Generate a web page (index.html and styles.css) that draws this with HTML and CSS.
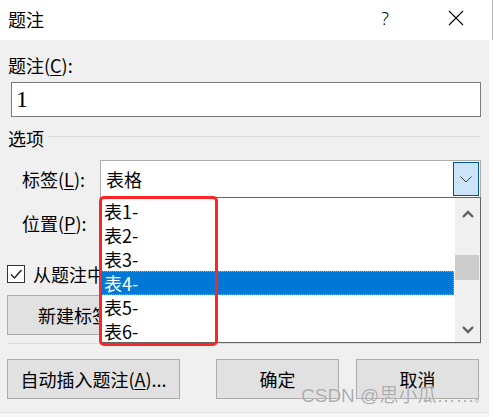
FILE: index.html
```html
<!DOCTYPE html>
<html lang="zh-CN">
<head>
<meta charset="utf-8">
<title>题注</title>
<link rel="stylesheet" href="styles.css">
</head>
<body>
<div class="titlebar">
  <span class="title">题注</span>
  <span class="help">?</span>
  <span class="close"><svg width="16" height="16" viewBox="0 0 16 16"><path d="M1 1 L15 15 M15 1 L1 15" stroke="#000" stroke-width="1.1" fill="none"/></svg></span>
</div>
<div class="main">
  <div class="dialog">
    <div class="label">题注(<u>C</u>):</div>
    <div class="input">1</div>
    <div class="group"><span>选项</span><span class="rule"></span></div>
    <div class="row row-label">
      <span class="lbl">标签(<u>L</u>):</span>
      <div class="combo">
        <span class="combo-text">表格</span>
        <span class="combo-btn"><svg width="12" height="7" viewBox="0 0 12 7"><path d="M0.5 0.5 L6 6 L11.5 0.5" stroke="#404040" stroke-width="1" fill="none"/></svg></span>
      </div>
    </div>
    <div class="row row-pos">
      <span class="lbl">位置(<u>P</u>):</span>
      <div class="combo"></div>
    </div>
    <div class="check-row">
      <span class="check"><svg width="16" height="16" viewBox="0 0 16 16"><path d="M3 8.5 L6.5 12 L13.5 4" stroke="#222" stroke-width="1.4" fill="none"/></svg></span>
      <span class="check-text">从题注中</span>
    </div>
    <div class="btn-row">
      <span class="btn wide">新建标签</span>
    </div>
    <div class="sep"></div>
    <div class="actions">
      <span class="btn wide">自动插入题注(<u>A</u>)...</span>
      <span class="btn ok">确定</span>
      <span class="btn">取消</span>
    </div>

    <div class="dropdown">
      <div class="items">
        <div class="item">表1-</div>
        <div class="item">表2-</div>
        <div class="item">表3-</div>
        <div class="item selected">表4-</div>
        <div class="item">表5-</div>
        <div class="item">表6-</div>
      </div>
      <div class="scrollbar">
        <span class="sb-up"><svg width="12" height="8" viewBox="0 0 12 8"><path d="M1 7 L6 2 L11 7" stroke="#606060" stroke-width="2.4" fill="none"/></svg></span>
        <span class="thumb"></span>
        <span class="sb-fill"></span>
        <span class="sb-down"><svg width="12" height="8" viewBox="0 0 12 8"><path d="M1 1 L6 6 L11 1" stroke="#606060" stroke-width="2.4" fill="none"/></svg></span>
      </div>
    </div>
    <div class="mark"></div>
  </div>
  <div class="edge"></div>
</div>
<div class="watermark">CSDN @思小瓜……<span class="dot">。</span></div>
</body>
</html>
```

FILE: styles.css
```css
html, body {
  margin: 0;
  padding: 0;
}
body {
  width: 493px;
  height: 417px;
  overflow: hidden;
  background: #fff;
  font-family: "Noto Sans CJK SC", "Noto Sans", sans-serif;
  font-size: 18px;
  color: #000;
  position: relative;
}
u {
  text-decoration: underline;
  text-underline-offset: 2px;
  text-decoration-thickness: 1px;
}

.titlebar {
  height: 40px;
  display: flex;
  align-items: center;
  background: #fff;
  padding-right: 13px;
  border-right: 1px solid #b9b9b9;
  box-sizing: border-box;
  width: 493px;
}
.title {
  flex: 1;
  padding-left: 8px;
  line-height: 24px;
  margin-top: -3px;
}
.help {
  width: 46px;
  text-align: center;
  line-height: 24px;
  margin-top: -4px;
  margin-right: 25px;
  font-family: "Noto Sans", sans-serif;
  font-size: 18px;
  font-weight: 300;
}
.close {
  width: 46px;
  display: flex;
  justify-content: center;
  align-items: center;
  margin-top: -4px;
}
.close svg { display: block; }

.main {
  display: flex;
  height: 377px;
  background: #f7f7f7;
}
.dialog {
  width: 489px;
  height: 373px;
  box-sizing: border-box;
  background: #f0f0f0;
  padding: 13px 8px 0 7px;
  position: relative;
  border-bottom: 1px solid #e2e2e2;
}
.edge {
  flex: 1;
  background: #fff;
}

.label {
  height: 24px;
  line-height: 24px;
  padding-left: 1px;
}
.input {
  margin: 5px 0 0 4px;
  width: 470px;
  height: 35px;
  box-sizing: border-box;
  border: 1px solid #7a7a7a;
  background: #fff;
  font-family: "Liberation Serif", serif;
  font-size: 24px;
  line-height: 32px;
  padding-left: 4px;
}
.group {
  margin-top: 9px;
  height: 24px;
  display: flex;
  line-height: 24px;
  padding-left: 1px;
}
.rule {
  flex: 1;
  height: 1px;
  background: #dcdcdc;
  margin-top: 10px;
  margin-left: 4px;
}
.row {
  display: flex;
  align-items: center;
  height: 38px;
}
.row-label { margin-top: 10px; }
.row-pos { margin-top: 6px; }
.lbl {
  width: 93px;
  padding-left: 15px;
  box-sizing: border-box;
  line-height: 24px;
}
.combo {
  width: 381px;
  height: 38px;
  box-sizing: border-box;
  border: 1px solid #adadad;
  background: #fff;
  display: flex;
  align-items: center;
}
.combo-text {
  flex: 1;
  padding-left: 5px;
  line-height: 24px;
}
.combo-btn {
  width: 26px;
  height: 34px;
  box-sizing: border-box;
  margin-right: 1px;
  background: #cce4f7;
  border: 1px solid #005499;
  display: flex;
  align-items: center;
  justify-content: center;
}
.combo-btn svg { display: block; }

/* rows partly covered by the open list: clipped at the list's left edge */
.check-row {
  margin-top: 20px;
  height: 24px;
  width: 93px;
  overflow: hidden;
  display: flex;
  align-items: center;
  line-height: 24px;
  white-space: nowrap;
}
.check {
  flex: none;
  width: 18px;
  height: 18px;
  box-sizing: border-box;
  border: 1px solid #333;
  background: #fff;
  display: flex;
  align-items: center;
  justify-content: center;
  margin-right: 8px;
}
.check svg { display: block; }

.btn-row {
  margin-top: 9px;
  width: 93px;
  overflow: hidden;
  display: flex;
}
.btn-row .btn {
  flex: none;
  justify-content: flex-start;
  padding-left: 30px;
}
.btn {
  height: 40px;
  width: 123px;
  box-sizing: border-box;
  border: 1px solid #adadad;
  background: #e1e1e1;
  display: flex;
  align-items: center;
  justify-content: center;
  line-height: 24px;
  white-space: nowrap;
}
.btn.wide { width: 173px; }
.sep {
  margin-top: 8px;
  height: 1px;
  background: #dadada;
  width: 474px;
}
.actions {
  margin-top: 15px;
  display: flex;
}
.actions .ok {
  margin-left: 36px;
  margin-right: 17px;
}

/* open drop-down list */
.dropdown {
  position: absolute;
  left: 100px;
  top: 157px;
  width: 381px;
  height: 146px;
  box-sizing: border-box;
  border: 1px solid #646464;
  background: #fff;
  display: flex;
}
.items {
  flex: 1;
  padding-top: 1px;
  margin-right: 1px;
}
.item {
  height: 24px;
  line-height: 24px;
  padding-left: 3px;
  box-sizing: border-box;
}
.item.selected {
  background: #0078d7;
  color: #fff;
  outline: 1px dotted #e69b3c;
  outline-offset: -1px;
}
.scrollbar {
  width: 25px;
  background: #f0f0f0;
  display: flex;
  flex-direction: column;
}
.sb-up {
  height: 32px;
  display: flex;
  align-items: center;
  justify-content: center;
}
.thumb {
  margin-top: 25px;
  height: 25px;
  background: #cdcdcd;
  margin-right: 1px;
}
.sb-fill { flex: 1; }
.sb-down {
  height: 24px;
  display: flex;
  align-items: center;
  justify-content: center;
}
.scrollbar svg { display: block; }

/* red annotation box */
.mark {
  position: absolute;
  left: 99px;
  top: 156px;
  width: 119px;
  height: 150px;
  box-sizing: border-box;
  border: 3px solid #fd2525;
  border-radius: 5px;
}

.watermark {
  position: absolute;
  left: 301px;
  top: 384px;
  font-family: "Liberation Sans", "Noto Sans CJK SC", sans-serif;
  font-size: 19px;
  line-height: 24px;
  color: rgba(150, 150, 150, 0.8);
  text-shadow: 0 0 1px rgba(255, 255, 255, 0.9);
  white-space: nowrap;
}
.watermark .dot {
  font-size: 12px;
}
```
